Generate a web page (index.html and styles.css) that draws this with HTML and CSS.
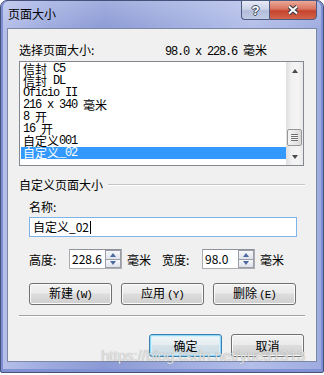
FILE: index.html
```html
<!DOCTYPE html>
<html>
<head>
 <meta charset="utf-8">
 <link rel="stylesheet" href="styles.css">
</head>
<body>
  <div class="window">
    <div class="titlebar">
      <span class="title">页面大小</span>
      <div class="caption-buttons">
        <div class="cap-btn help">?</div>
        <div class="cap-btn close">
          <svg width="12" height="10" viewBox="0 0 12 10">
            <path d="M2 1.5 L10 8.5 M10 1.5 L2 8.5" stroke="#3a3a4a" stroke-width="4.2" fill="none"/>
            <path d="M2 1.5 L10 8.5 M10 1.5 L2 8.5" stroke="#ffffff" stroke-width="2" fill="none"/>
          </svg>
        </div>
      </div>
    </div>

    <div class="client">
      <div class="size-row">
        <span class="zh size-label">选择页面大小:</span>
        <span class="current">98.0 x 228.6 <span class="zh">毫米</span></span>
      </div>

      <div class="listbox">
        <ul class="items">
          <li><span class="zh">信封</span> C5</li>
          <li><span class="zh">信封</span> DL</li>
          <li>Oficio II</li>
          <li>216 x 340 <span class="zh">毫米</span></li>
          <li>8 <span class="zh">开</span></li>
          <li>16 <span class="zh">开</span></li>
          <li><span class="zh">自定义</span>001</li>
          <li class="selected"><span class="zh">自定义</span>_02</li>
        </ul>
        <div class="scrollbar">
          <div class="arrow"><span class="tri up"></span></div>
          <div class="track"><div class="thumb"><span class="grip"></span></div></div>
          <div class="arrow"><span class="tri down"></span></div>
        </div>
      </div>

      <div class="group-title">
        <span>自定义页面大小</span>
        <div class="rule"></div>
      </div>

      <div class="group">
        <div class="label">名称:</div>
        <div class="name-input">自定义_02<span class="caret"></span></div>

        <div class="dims">
          <span class="dim-label">高度:</span>
          <div class="spin">
            <span class="spin-value">228.6</span>
            <div class="spin-btns">
              <div class="spin-btn"><span class="tri up blue"></span></div>
              <div class="spin-btn"><span class="tri down blue"></span></div>
            </div>
          </div>
          <span class="unit">毫米</span>
          <span class="dim-label">宽度:</span>
          <div class="spin">
            <span class="spin-value">98.0</span>
            <div class="spin-btns">
              <div class="spin-btn"><span class="tri up blue"></span></div>
              <div class="spin-btn"><span class="tri down blue"></span></div>
            </div>
          </div>
          <span class="unit">毫米</span>
        </div>

        <div class="actions">
          <button class="btn">新建<span class="key">(W)</span></button>
          <button class="btn">应用<span class="key">(Y)</span></button>
          <button class="btn">删除<span class="key">(E)</span></button>
        </div>
      </div>

      <div class="separator"></div>

      <div class="footer">
        <button class="btn default">确定</button>
        <button class="btn">取消</button>
      </div>
    </div>

    <div class="watermark">https://blog.csdn.net/yue31313</div>
  </div>
</body>
</html>
```

FILE: styles.css
```css
body {
  margin: 0;
  background: #ffffff;
  font-family: "Noto Sans CJK SC", "Liberation Sans", sans-serif;
  font-size: 12px;
  color: #000;
}

.window {
  position: relative;
  box-sizing: border-box;
  width: 324px;
  height: 373px;
  border: 1px solid #44517a;
  border-radius: 7px 7px 2px 2px;
  padding: 0 6px 10px;
  display: flex;
  flex-direction: column;
  background:
    linear-gradient(to bottom, rgba(255, 255, 255, 0.2), rgba(255, 255, 255, 0) 30px),
    linear-gradient(to right, #b6c0ea 0%, #9eabdf 14%, #8b9ad5 32%, #a1aee0 58%, #b3bee9 78%, #9dabdf 100%);
  box-shadow: inset 2px 0 0 #7d8ed2, inset -2px 0 0 #7d8ed2, inset 0 -3px 0 #8191d4;
}

/* title bar */
.titlebar {
  height: 27px;
  display: flex;
  align-items: flex-start;
}

.title {
  padding: 5px 0 0 1px;
  line-height: 16px;
  font-size: 12px;
}

.caption-buttons {
  margin-left: auto;
  margin-top: -1px;
  display: flex;
}

.cap-btn {
  box-sizing: border-box;
  height: 20px;
  border: 1px solid #4d5a82;
  display: flex;
  align-items: center;
  justify-content: center;
}

.help {
  width: 28px;
  border-right: none;
  border-radius: 0 0 0 4px;
  background: linear-gradient(to bottom, #e6eaf5 0%, #ccd3e8 45%, #b3bdda 55%, #c2cbe4 100%);
  font-family: "Liberation Sans", sans-serif;
  font-weight: bold;
  font-size: 13px;
  color: #fff;
  text-shadow: -1px 0 #3c465e, 1px 0 #3c465e, 0 -1px #3c465e, 0 1px #3c465e;
}

.close {
  width: 48px;
  border-radius: 0 0 4px 0;
  background: linear-gradient(to bottom, #eaa998 0%, #d9735e 45%, #c7432d 55%, #d2654c 100%);
}

/* client area */
.client {
  flex: 1;
  border: 1px solid #7d88a6;
  background: #f0f0f0;
  padding: 14px 11px 0;
}

.size-row {
  height: 13px;
  line-height: 13px;
  display: flex;
  font-family: "Liberation Mono", monospace;
  font-size: 12px;
  letter-spacing: -1.2px;
}

.zh {
  font-family: "Noto Sans CJK SC", sans-serif;
  font-size: 12px;
  letter-spacing: 0;
}

.size-label {
  width: 146px;
}

.listbox {
  box-sizing: border-box;
  margin-top: 5px;
  width: 285px;
  height: 105px;
  border: 1px solid #828790;
  background: #fff;
  display: flex;
}

.items {
  list-style: none;
  margin: 0;
  padding: 1px 0 0 1px;
  flex: 1;
  font-family: "Liberation Mono", monospace;
  font-size: 12px;
  letter-spacing: -1.2px;
}

.items li {
  height: 12px;
  line-height: 12px;
  padding-left: 2px;
  white-space: nowrap;
}

.items .zh {
  line-height: 12px;
  vertical-align: top;
}

.items li.selected {
  background: #3399ff;
  color: #fff;
}

.scrollbar {
  width: 17px;
  display: flex;
  flex-direction: column;
  background: linear-gradient(to right, #e2e2e2, #f2f2f2 30%, #f4f4f4 70%, #e9e9e9);
  border-left: 1px solid #e0e0e0;
  box-sizing: border-box;
}

.arrow {
  height: 17px;
  display: flex;
  align-items: center;
  justify-content: center;
}

.tri {
  width: 0;
  height: 0;
  border-left: 3.5px solid transparent;
  border-right: 3.5px solid transparent;
}

.tri.up {
  border-bottom: 4px solid #4a4a4a;
}

.tri.down {
  border-top: 4px solid #4a4a4a;
}

.tri.blue.up {
  border-bottom-color: #4d6aa0;
}

.tri.blue.down {
  border-top-color: #4d6aa0;
}

.track {
  flex: 1;
  display: flex;
  flex-direction: column;
  justify-content: flex-end;
}

.thumb {
  height: 17px;
  margin: 0 1px 2px 0;
  box-sizing: border-box;
  border: 1px solid #979797;
  border-radius: 2px;
  background: linear-gradient(to right, #f4f4f4, #e8e8e8 50%, #d8d8d8);
  display: flex;
  align-items: center;
  justify-content: center;
}

.grip {
  width: 7px;
  height: 7px;
  background: repeating-linear-gradient(to bottom, #6f6f6f 0 1px, #f4f4f4 1px 2px);
}

/* custom size group */
.group-title {
  margin-top: 12px;
  height: 14px;
  line-height: 14px;
  display: flex;
  align-items: center;
}

.rule {
  flex: 1;
  margin-left: 5px;
  border-top: 1px solid #c5c5c5;
  border-bottom: 1px solid #fff;
}

.group {
  padding-left: 10px;
}

.label {
  margin-top: 8px;
  height: 14px;
  line-height: 14px;
}

.name-input {
  box-sizing: border-box;
  margin-top: 3px;
  width: 268px;
  height: 20px;
  line-height: 18px;
  padding-left: 3px;
  border: 1px solid #7eb4ea;
  background: #fff;
  display: flex;
  align-items: center;
}

.caret {
  width: 1px;
  height: 13px;
  background: #000;
  margin-left: 1px;
}

.dims {
  margin-top: 12px;
  height: 20px;
  display: flex;
  align-items: center;
}

.dim-label {
  width: 40px;
  flex: none;
}

.spin {
  box-sizing: border-box;
  width: 53px;
  height: 20px;
  border: 1px solid #abadb3;
  border-top-color: #8f929a;
  background: #fff;
  display: flex;
}

.spin-value {
  flex: 1;
  padding-left: 2px;
  line-height: 18px;
}

.spin-btns {
  width: 16px;
  display: flex;
  flex-direction: column;
}

.spin-btn {
  flex: 1;
  box-sizing: border-box;
  border: 1px solid #9a9da6;
  background: linear-gradient(to bottom, #f6f7fa, #dfe3ec);
  display: flex;
  align-items: center;
  justify-content: center;
}

.spin-btn + .spin-btn {
  border-top: none;
}

.unit {
  margin: 0 11px 0 5px;
}

.dims .unit:last-child {
  margin-left: 5px;
}

.actions {
  margin-top: 14px;
  display: flex;
  gap: 9px;
}

.btn {
  box-sizing: border-box;
  width: 83px;
  height: 22px;
  padding: 0;
  border: 1px solid #707070;
  border-radius: 3px;
  background: linear-gradient(to bottom, #f2f2f2 0%, #ebebeb 45%, #dddddd 50%, #cfcfcf 100%);
  box-shadow: inset 0 0 0 1px #fbfbfb;
  font-family: "Noto Sans CJK SC", sans-serif;
  font-size: 12px;
  color: #000;
  line-height: 18px;
}

.key {
  font-family: "Liberation Mono", monospace;
  font-size: 11px;
  letter-spacing: -1px;
  margin-left: 2px;
}

.separator {
  margin-top: 10px;
  border-top: 1px solid #a0a0a0;
  border-bottom: 1px solid #fff;
}

.footer {
  margin-top: 17px;
  padding-right: 1px;
  display: flex;
  justify-content: flex-end;
  gap: 9px;
}

.footer .btn {
  width: 73px;
  height: 23px;
}

.btn.default {
  border-color: #3c7fb1;
  box-shadow: inset 0 0 0 1px #8fd8f7, inset 0 0 0 2px #d4f0fb;
  background: linear-gradient(to bottom, #f0f6f9 0%, #e6eef2 45%, #d6e2e8 50%, #cbdae2 100%);
}

.watermark {
  position: absolute;
  left: 100px;
  top: 346px;
  font-family: "Liberation Sans", sans-serif;
  font-size: 15px;
  color: rgba(238, 238, 238, 0.85);
  text-shadow: 0 0 1px rgba(110, 110, 110, 0.7);
  white-space: nowrap;
}
```
